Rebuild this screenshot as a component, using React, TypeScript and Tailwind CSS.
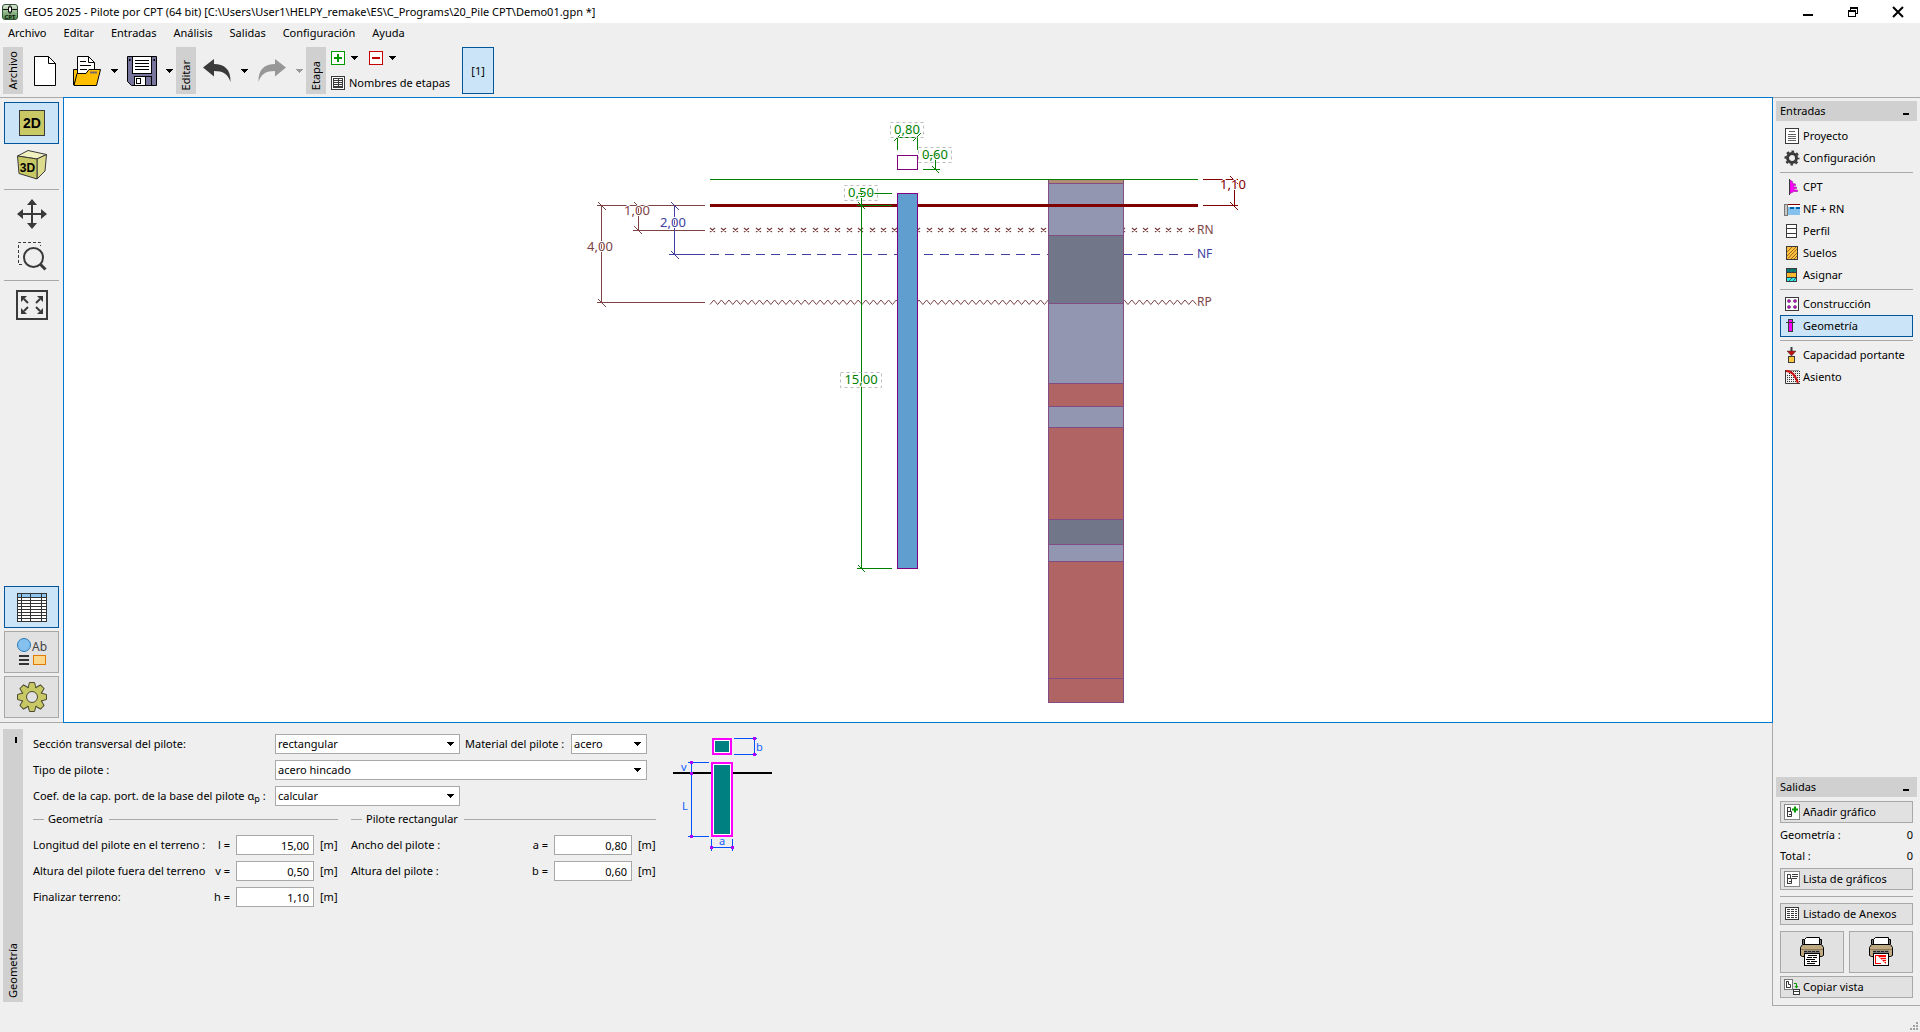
import { useState } from "react";
import type { ReactNode } from "react";

const MENU = ["Archivo", "Editar", "Entradas", "Análisis", "Salidas", "Configuración", "Ayuda"];

/* ---------- small shared pieces ---------- */

function Caret({ muted = false }: { muted?: boolean }) {
    return (
        <svg width="8" height="4" viewBox="0 0 8 4" shapeRendering="crispEdges">
            <path d="M0 0h8L4 4z" fill={muted ? "#9a9a9a" : "#000"} />
        </svg>
    );
}

function CaretButton({ label, muted }: { label: string; muted?: boolean }) {
    return (
        <button aria-label={label} className="flex w-[14px] items-center justify-center self-stretch">
            <Caret muted={muted} />
        </button>
    );
}

function VerticalLabel({ children }: { children: string }) {
    return (
        <div className="flex w-5 items-end justify-center bg-[#d0d0d0] pb-1">
            <span className="rotate-180 leading-4 [writing-mode:vertical-rl]">{children}</span>
        </div>
    );
}

function Icon({ children }: { children: ReactNode }) {
    return (
        <svg width="16" height="16" viewBox="0 0 16 16" className="shrink-0">
            {children}
        </svg>
    );
}

/* ---------- title bar + toolbar ---------- */

function TitleBar() {
    return (
        <div className="flex h-[23px] items-center bg-white">
            <svg width="16" height="16" viewBox="0 0 16 16" className="ml-0.5 shrink-0">
                <defs>
                    <linearGradient id="logo" x1="0" y1="0" x2="0" y2="1">
                        <stop offset="0" stopColor="#dfead8" />
                        <stop offset="1" stopColor="#4c8a45" />
                    </linearGradient>
                </defs>
                <rect x=".5" y=".5" width="15" height="15" rx="2.5" fill="url(#logo)" stroke="#33533a" />
                <path d="M1 5.5h5M10 5.5h5M8 1v2M8 8v2" stroke="#111" />
                <rect x="6.5" y="3" width="3" height="5" fill="#fff" stroke="#111" />
                <text x="8" y="14.5" textAnchor="middle" fontSize="6" fontWeight="700" fill="#111">CPT</text>
            </svg>
            <h1 className="ml-1.5 flex-1">
                GEO5 2025 - Pilote por CPT (64 bit) [C:\Users\User1\HELPY_remake\ES\C_Programs\20_Pile CPT\Demo01.gpn *]
            </h1>
            <div className="flex self-stretch">
                <button aria-label="Minimizar" className="flex w-[45px] items-center justify-center">
                    <svg width="12" height="12" viewBox="0 0 12 12"><path d="M1 9h10" stroke="#000" strokeWidth="2" /></svg>
                </button>
                <button aria-label="Restaurar" className="flex w-[45px] items-center justify-center">
                    <svg width="12" height="12" viewBox="0 0 12 12" fill="none" stroke="#000" shapeRendering="crispEdges">
                        <path d="M3.5 4V1.5h7v6H8" />
                        <path d="M3 2h8" />
                        <rect x="1.5" y="4.5" width="7" height="6" />
                        <path d="M1 5.5h8" />
                    </svg>
                </button>
                <button aria-label="Cerrar" className="flex w-[45px] items-center justify-center">
                    <svg width="12" height="12" viewBox="0 0 12 12"><path d="M1 1l10 10M11 1L1 11" stroke="#000" strokeWidth="2" /></svg>
                </button>
            </div>
        </div>
    );
}

function NewFileIcon() {
    return (
        <svg width="22" height="30" viewBox="0 0 22 30">
            <path d="M.5.5h14l7 7v22H.5z" fill="#fff" stroke="#000" />
            <path d="M14.5.5v7h7" fill="none" stroke="#000" />
        </svg>
    );
}

function OpenIcon() {
    return (
        <svg width="28" height="30" viewBox="0 0 28 30" stroke="#000">
            <path d="M.5 29V13.500h5v6z" fill="#ffc107" />
            <path d="M4.500 18V.5h11l6 6V18z" fill="#fff" />
            <path d="M15.500.5v6h6" fill="none" />
            <path d="M7 5.500h6M7 9.500h11M7 13.500h7" />
            <path d="M1 29.500l3-12h9l3-4h11.500l-4 16z" fill="#ffbf00" />
            <path d="M17 16.500h7" stroke="#7a6a6a" strokeWidth="2" />
        </svg>
    );
}

function SaveIcon() {
    return (
        <svg width="30" height="30" viewBox="0 0 30 30" stroke="#000">
            <path d="M.5.5h29v29H4.500l-4-4z" fill="#77759c" />
            <rect x="5.500" y=".5" width="19" height="17" fill="#fff" />
            <path d="M8 4.500h14M8 7.500h14M8 10.500h14M8 13.500h14" />
            <rect x="7.500" y="20.500" width="17" height="9" fill="#fff" />
            <rect x="18.500" y="20.500" width="6" height="9" fill="#77759c" />
            <rect x="9.500" y="22.500" width="4" height="5" fill="#fff" />
            <rect x="2" y="3" width="1.500" height="2" fill="#000" stroke="none" />
            <rect x="26.500" y="3" width="1.500" height="2" fill="#000" stroke="none" />
        </svg>
    );
}

function UndoIcon({ muted = false }: { muted?: boolean }) {
    return (
        <svg width="28" height="23" viewBox="0 0 28 23" className={muted ? "-scale-x-100" : ""}>
            <path d="M0 8.500L11 0v5c10 0 17 5 16.500 18C25 15 20 12 11 12v5.500z" fill={muted ? "#979797" : "#3a3a3a"} />
        </svg>
    );
}

function StageMark({ sign }: { sign: "plus" | "minus" }) {
    const color = sign === "plus" ? "#009a00" : "#c80000";
    return (
        <svg width="14" height="14" viewBox="0 0 14 14">
            <rect x=".5" y=".5" width="13" height="13" fill="#fff" stroke={color} />
            <path d={sign === "plus" ? "M3 7h8M7 3v8" : "M3 7h8"} stroke={color} strokeWidth="2" />
        </svg>
    );
}

function Toolbar() {
    return (
        <div className="flex h-[54px] pt-1 pr-1 pb-[3px] pl-[3px]">
            <VerticalLabel>Archivo</VerticalLabel>
            <button aria-label="Nuevo" className="flex w-[43px] items-center justify-center"><NewFileIcon /></button>
            <button aria-label="Abrir" className="flex w-[41px] items-center justify-center"><OpenIcon /></button>
            <CaretButton label="Abrir recientes" />
            <button aria-label="Guardar" className="flex w-[41px] items-center justify-center"><SaveIcon /></button>
            <CaretButton label="Guardar como" />
            <VerticalLabel>Editar</VerticalLabel>
            <button aria-label="Deshacer" className="flex w-[41px] items-center justify-center"><UndoIcon /></button>
            <CaretButton label="Historial de deshacer" />
            <button aria-label="Rehacer" className="flex w-[41px] items-center justify-center"><UndoIcon muted /></button>
            <CaretButton label="Historial de rehacer" muted />
            <VerticalLabel>Etapa</VerticalLabel>
            <div className="flex flex-col justify-between py-1 pl-[5px]">
                <div className="flex h-[14px] items-center gap-0.5">
                    <button aria-label="Añadir etapa"><StageMark sign="plus" /></button>
                    <CaretButton label="Opciones de añadir" />
                    <button aria-label="Quitar etapa" className="ml-1.5"><StageMark sign="minus" /></button>
                    <CaretButton label="Opciones de quitar" />
                </div>
                <button className="flex h-[14px] items-center gap-1">
                    <svg width="14" height="14" viewBox="0 0 14 14" stroke="#3a3a3a" shapeRendering="crispEdges">
                        <rect x=".5" y=".5" width="13" height="13" fill="#fff" />
                        <rect x="2.500" y="2.500" width="9" height="9" fill="none" />
                        <path d="M7.500 2v10M2 4.500h10M2 6.500h10M2 8.500h10M2 10.500h10" />
                    </svg>
                    Nombres de etapas
                </button>
            </div>
            <button className="ml-3 w-8 border border-[#00559b] bg-[#cce4f7]">[1]</button>
        </div>
    );
}

/* ---------- left tool column ---------- */

function ToolButton({ label, look = "plain", children }: { label: string; look?: "plain" | "raised" | "active"; children: ReactNode }) {
    const looks = {
        plain: "",
        raised: "border border-[#a8a8a8] bg-[#e1e1e1]",
        active: "border border-[#00559b] bg-[#cce4f7]",
    };
    return (
        <button aria-label={label} className={`flex h-[42px] w-[55px] items-center justify-center ${looks[look]}`}>
            {children}
        </button>
    );
}

function ToolColumn() {
    return (
        <div className="flex flex-col justify-between border-y border-[#a8a8a8] px-1 py-1">
            <div>
                <ToolButton label="Vista 2D" look="active">
                    <svg width="26" height="26" viewBox="0 0 26 26">
                        <rect x=".5" y=".5" width="25" height="25" fill="#c8c864" stroke="#3a3a3a" />
                        <text x="13" y="18" textAnchor="middle" fontSize="14" fontWeight="700" className="font-['Liberation_Sans',sans-serif]">2D</text>
                    </svg>
                </ToolButton>
                <ToolButton label="Vista 3D">
                    <svg width="30" height="30" viewBox="0 0 30 30" stroke="#3a3a3a" strokeLinejoin="round">
                        <path d="M.5 6L11 .5l18.500 4L20 9z" fill="#f0f0c0" />
                        <path d="M20 9l9.500-4.500L28 21l-8 8z" fill="#dcdc8c" />
                        <path d="M.5 6L20 9v20L2 23.500z" fill="#c8c864" />
                        <text x="10.500" y="22" textAnchor="middle" fontSize="12" fontWeight="700" fill="#000" stroke="none" className="font-['Liberation_Sans',sans-serif]">3D</text>
                    </svg>
                </ToolButton>
                <hr className="my-[3px] border-[#a8a8a8]" />
                <ToolButton label="Mover">
                    <svg width="30" height="30" viewBox="0 0 30 30" fill="#3a3a3a">
                        <path d="M15 4v22M4 15h22" stroke="#3a3a3a" strokeWidth="2" />
                        <path d="M15 0l5 6H10zM15 30l5-6H10zM0 15l6-5v10zM30 15l-6-5v10z" />
                    </svg>
                </ToolButton>
                <ToolButton label="Ampliar zona">
                    <svg width="30" height="30" viewBox="0 0 30 30" fill="none" stroke="#3a3a3a">
                        <path d="M5 23.500H1.500v-22h22V5" strokeDasharray="3 2" />
                        <circle cx="16.500" cy="16.500" r="9.500" fill="#efefef" strokeWidth="2" />
                        <path d="M23.500 23.500l5 5" strokeWidth="3" />
                    </svg>
                </ToolButton>
                <hr className="my-[3px] border-[#a8a8a8]" />
                <ToolButton label="Ajustar a ventana">
                    <svg width="32" height="30" viewBox="0 0 32 30" fill="#3a3a3a" stroke="#3a3a3a">
                        <rect x="1" y="1" width="30" height="28" fill="none" strokeWidth="2" />
                        <path d="M8 9l4 4M24 9l-4 4M8 21l4-4M24 21l-4-4" strokeWidth="2" />
                        <path d="M5 6h6l-6 6zM27 6h-6l6 6zM5 24h6l-6-6zM27 24h-6l6-6z" stroke="none" />
                    </svg>
                </ToolButton>
            </div>
            <div className="flex flex-col gap-[3px]">
                <ToolButton label="Tabla" look="active">
                    <svg width="30" height="29" viewBox="0 0 30 29" stroke="#333" shapeRendering="crispEdges">
                        <rect x=".5" y=".5" width="29" height="28" fill="#fff" />
                        <rect x=".5" y=".5" width="29" height="4" fill="#8cc4f0" />
                        <path d="M0 7.500h30M0 10.500h30M0 13.500h30M0 16.500h30M0 19.500h30M0 22.500h30M0 25.500h30M4.500 0v29M13.500 0v29M24.500 0v29" />
                    </svg>
                </ToolButton>
                <ToolButton label="Estilos de dibujo" look="raised">
                    <svg width="30" height="28" viewBox="0 0 30 28">
                        <circle cx="7" cy="7" r="6.500" fill="#85c1ef" stroke="#2878b8" />
                        <text x="15" y="13" fontSize="12" fill="#444">Ab</text>
                        <path d="M2 18h10M2 22h10M2 26h10" stroke="#333" strokeWidth="2" />
                        <rect x="16.500" y="17.500" width="12" height="9" fill="#fbd78c" stroke="#e07b00" />
                    </svg>
                </ToolButton>
                <ToolButton label="Ajustes" look="raised">
                    <svg width="30" height="30" viewBox="-15 -15 30 30" stroke="#4a4a30" fill="#c8c864">
                        <circle r="10" />
                        {[0, 45, 90, 135, 180, 225, 270, 315].map(a => (
                            <path key={a} d="M-4-9L-2.500-14.500h5L4-9" transform={`rotate(${a})`} />
                        ))}
                        <circle r="9.500" stroke="none" />
                        <circle r="5.500" fill="#e1e1e1" />
                    </svg>
                </ToolButton>
            </div>
        </div>
    );
}

/* ---------- drawing ---------- */

const LAYERS = [
    { top: 179, bottom: 183, fill: "#b08e76" },
    { top: 183, bottom: 235, fill: "#9296b0" },
    { top: 235, bottom: 303, fill: "#717789" },
    { top: 303, bottom: 383, fill: "#9296b0" },
    { top: 383, bottom: 406, fill: "#b06463" },
    { top: 406, bottom: 427, fill: "#9296b0" },
    { top: 427, bottom: 519, fill: "#b06463" },
    { top: 519, bottom: 544, fill: "#717789" },
    { top: 544, bottom: 561, fill: "#9296b0" },
    { top: 561, bottom: 678, fill: "#b06463" },
    { top: 678, bottom: 702, fill: "#b06463" },
];

const BROWN = "#7c4444";
const BLUE = "#4040a0";
const GREEN = "#008000";
const MAROON = "#800000";

const crosses = Array.from({ length: 43 }, (_, i) => Math.round(710 + i * 11.4));
const zigzag = Array.from({ length: 129 }, (_, i) => `${710 + i * 3.8},${i % 2 ? 300 : 304.5}`).join(" ");

function DimText({ x, y, color, boxed, children }: { x: number; y: number; color: string; boxed?: number; children: string }) {
    return (
        <>
            {boxed && (
                <rect x={x - boxed / 2} y={y - 11.5} width={boxed} height="15" fill="none" stroke="#bdbdbd" strokeDasharray="3 3" />
            )}
            <text x={x} y={y} textAnchor="middle" fill={color} stroke="#fff" strokeWidth="2" paintOrder="stroke">{children}</text>
        </>
    );
}

function PileDrawing() {
    return (
        <svg viewBox="64 98 1708 624" className="block h-full w-full text-[13px]" fill="none">
            <g shapeRendering="crispEdges">
                {/* reference levels */}
                <path d={crosses.map(x => `M${x} 228l5 4M${x + 5} 228l-5 4`).join("")} stroke={BROWN} strokeWidth="1.200" shapeRendering="auto" />
                <path d="M710 254.500h488" stroke={BLUE} strokeDasharray="9 6.300" />
                <polyline points={zigzag} stroke={BROWN} shapeRendering="auto" />

                {/* soil profile */}
                {LAYERS.map(l => (
                    <rect key={l.top} x="1048.500" y={l.top + 0.5} width="75" height={l.bottom - l.top} fill={l.fill} stroke="#814d82" />
                ))}
                <path d="M710 179.500h488" stroke={GREEN} />
                <rect x="710" y="204" width="488" height="3" fill={MAROON} />

                {/* pile */}
                <rect x="897.500" y="193.500" width="20" height="375" fill="#5f9ecf" stroke="#800080" />
                <rect x="897.500" y="155.500" width="20" height="14" fill="#fff" stroke="#800080" />

                {/* level dimensions */}
                <path d="M597 205.500h108M597 302.500h108M601.500 205v97M633 230.500h72M638.500 205v25" stroke={BROWN} />
                <path d="M669 254.500h36M674.500 205v49" stroke={BLUE} />
                {/* pile dimensions */}
                <path d="M857 568.500h35M857 205.500h35M858 193.500h34M861.500 193v375M897.500 137v13M917.500 137v13M897 137.500h21M923 155.500h17M923 169.500h17M935.500 155v14" stroke={GREEN} />
                {/* terrain dimension */}
                <path d="M1203 179.500h35M1203 205.500h35M1234.500 179v26" stroke={MAROON} />
            </g>

            <path d="M598 202l8 8M598 299l8 8M634 202l6 6M634 226l8 8" stroke={BROWN} />
            <path d="M671 202l8 8M671 251l8 8" stroke={BLUE} />
            <path d="M858 202l7 7M858 565l7 7M894 141l6-6M913 141l8-8M932 166l7 7" stroke={GREEN} />
            <path d="M1230 176l8 8M1230 202l8 8" stroke={MAROON} />

            <DimText x={600} y={251} color={BROWN}>4,00</DimText>
            <DimText x={637} y={215} color={BROWN}>1,00</DimText>
            <DimText x={673} y={227} color={BLUE}>2,00</DimText>
            <DimText x={907} y={134} color={GREEN} boxed={33}>0,80</DimText>
            <DimText x={935} y={159} color={GREEN} boxed={33}>0,60</DimText>
            <DimText x={861} y={197} color={GREEN} boxed={33}>0,50</DimText>
            <DimText x={861} y={384} color={GREEN} boxed={41}>15,00</DimText>
            <DimText x={1233} y={189} color={MAROON}>1,10</DimText>
            <g className="text-[12px]">
                <text x="1197" y="234" fill={BROWN}>RN</text>
                <text x="1197" y="258" fill={BLUE}>NF</text>
                <text x="1197" y="306" fill={BROWN}>RP</text>
            </g>
        </svg>
    );
}

/* ---------- bottom form ---------- */

function Select({ id, width, options }: { id: string; width: string; options: string[] }) {
    return (
        <div className={`relative ${width}`}>
            <select id={id} className="block h-5 w-full appearance-none border border-[#a8a8a8] bg-white pr-5 pl-0.5 leading-4">
                {options.map(o => <option key={o}>{o}</option>)}
            </select>
            <span className="pointer-events-none absolute inset-y-0 right-1.5 flex items-center"><Caret /></span>
        </div>
    );
}

function Field({ id, label, symbol, initial }: { id: string; label: string; symbol: string; initial: string }) {
    const [value, setValue] = useState(initial);
    return (
        <div className="flex h-5 items-center">
            <label htmlFor={id} className="flex flex-1 justify-between whitespace-nowrap">
                <span>{label}</span>
                <span>{symbol} =</span>
            </label>
            <input
                id={id}
                value={value}
                onChange={e => setValue(e.target.value)}
                className="mx-1.5 h-5 w-[78px] border border-[#a8a8a8] bg-white pr-1 text-right"
            />
            <span className="w-[18px]">[m]</span>
        </div>
    );
}

function Group({ title, children }: { title: string; children: ReactNode }) {
    return (
        <section className="w-[305px]">
            <h2 className="flex h-4 items-center">
                <span className="w-[11px] border-t border-[#a8a8a8]" />
                <span className="mx-1">{title}</span>
                <span className="ml-0.5 flex-1 border-t border-[#a8a8a8]" />
            </h2>
            <div className="mt-2 flex flex-col gap-1.5">{children}</div>
        </section>
    );
}

function SchemeDiagram() {
    return (
        <svg width="104" height="120" viewBox="0 0 104 120" className="shrink-0 text-[11px]" fill="none">
            <g shapeRendering="crispEdges">
                <path d="M1 39h99" stroke="#000" strokeWidth="2" />
                <rect x="41" y="5" width="18" height="15" fill="#fff" stroke="#f0f" strokeWidth="2" />
                <rect x="43" y="7" width="14" height="11" fill="#008080" />
                <rect x="40" y="29" width="20" height="73" fill="#fff" stroke="#f0f" strokeWidth="2" />
                <rect x="42" y="31" width="16" height="69" fill="#008080" />
                <path d="M16 28.500h21M16 102.500h21M19.500 28v74M62 4.500h23M62 20.500h23M82.500 4v16M39.500 105v12M60.500 105v12M39 113.500h22" stroke="#0050ff" />
                <path d="M18 28.500h3M18 39.500h3M18 102.500h3M81 4.500h3M81 20.500h3M38 113.500h3M59 113.500h3" stroke="#b000ff" strokeWidth="3" />
            </g>
            <g fill="#1060ff">
                <text x="9" y="37">v</text>
                <text x="10" y="76">L</text>
                <text x="84" y="17">b</text>
                <text x="50" y="111" textAnchor="middle">a</text>
            </g>
        </svg>
    );
}

function GeometryPanel() {
    return (
        <div className="flex min-h-[283px] border-r border-[#a8a8a8] pt-1.5 pb-1 pl-[3px]">
            <div className="flex w-5 flex-col items-center justify-between bg-[#d0d0d0] pt-2 pb-1">
                <button aria-label="Contraer panel" className="ml-1.5 h-1.5 w-0.5 bg-black" />
                <span className="rotate-180 leading-4 [writing-mode:vertical-rl]">Geometría</span>
            </div>
            <form className="ml-2.5 pt-[5px]">
                <div className="flex flex-col gap-1.5">
                    <div className="flex items-center">
                        <label htmlFor="section" className="w-[242px]">Sección transversal del pilote:</label>
                        <Select id="section" width="w-[185px]" options={["rectangular", "circular"]} />
                        <label htmlFor="material" className="w-[111px] pl-[5px]">Material del pilote :</label>
                        <Select id="material" width="w-[76px]" options={["acero", "hormigón"]} />
                    </div>
                    <div className="flex items-center">
                        <label htmlFor="type" className="w-[242px]">Tipo de pilote :</label>
                        <Select id="type" width="w-[372px]" options={["acero hincado", "hormigón hincado"]} />
                    </div>
                    <div className="flex items-center">
                        <label htmlFor="coef" className="w-[242px] whitespace-nowrap">
                            Coef. de la cap. port. de la base del pilote α<sub className="text-[9px]">p</sub> :
                        </label>
                        <Select id="coef" width="w-[185px]" options={["calcular", "introducir"]} />
                    </div>
                </div>
                <div className="mt-[5px] flex gap-[13px]">
                    <Group title="Geometría">
                        <Field id="l" label="Longitud del pilote en el terreno :" symbol="l" initial="15,00" />
                        <Field id="v" label="Altura del pilote fuera del terreno" symbol="v" initial="0,50" />
                        <Field id="h" label="Finalizar terreno:" symbol="h" initial="1,10" />
                    </Group>
                    <Group title="Pilote rectangular">
                        <Field id="a" label="Ancho del pilote :" symbol="a" initial="0,80" />
                        <Field id="b" label="Altura del pilote :" symbol="b" initial="0,60" />
                    </Group>
                </div>
            </form>
            <div className="ml-4 pt-[5px]"><SchemeDiagram /></div>
        </div>
    );
}

/* ---------- right sidebar ---------- */

const INK = "#3a3a3a";

const icons: Record<string, ReactNode> = {
    Proyecto: (
        <Icon>
            <rect x="1.500" y=".5" width="13" height="15" fill="#fff" stroke={INK} />
            <path d="M5 3.500h6M4 6.500h8M4 8.500h8M4 10.500h8M4 12.500h8" stroke="#666" />
        </Icon>
    ),
    Configuración: (
        <Icon>
            <circle cx="8" cy="8" r="4.500" fill="none" stroke={INK} strokeWidth="3" />
            <circle cx="8" cy="8" r="6.500" fill="none" stroke={INK} strokeWidth="2" strokeDasharray="2.600 2.505" strokeDashoffset="1.300" />
        </Icon>
    ),
    CPT: (
        <Icon>
            <path d="M6 1l2.500 1.500v2l3 .5v1.500H9.500V8h3v1.500H10v1.500h3.500v1.500H10L6 14.500z" fill="#f0f" stroke="#a010a0" strokeWidth=".6" />
            <path d="M5.500 0v16" stroke={INK} />
        </Icon>
    ),
    "NF + RN": (
        <Icon>
            <rect x="3" y="5" width="13" height="9" fill="#85c1ef" />
            <path d="M4 3.500h12" stroke={MAROON} />
            <path d="M4 5h12" stroke="#fff" strokeWidth="2" />
            <path d="M6 7h4M12 7h4" stroke="#0060b0" strokeWidth="2" />
            <rect x=".5" y="3.500" width="3" height="11" fill="#c8c8c8" stroke="#777" />
        </Icon>
    ),
    Perfil: (
        <Icon>
            <rect x="2.500" y="1.500" width="10" height="13" fill="#fff" stroke={INK} />
            <path d="M2 5.500h11M2 10.500h11" stroke={INK} />
        </Icon>
    ),
    Suelos: (
        <Icon>
            <rect x="2.500" y="1.500" width="11" height="13" fill="#ffc040" stroke={INK} />
            <path d="M3 7l5-5M3 11l9-9M4 13.500L13 4M7 14l6-6M10 14l3-3" stroke="#8a6018" strokeWidth=".9" />
        </Icon>
    ),
    Asignar: (
        <Icon>
            <rect x="2.500" y="1.500" width="10" height="4" fill="#008080" stroke={INK} />
            <rect x="2.500" y="5.500" width="10" height="5" fill="#ffb830" stroke={INK} />
            <rect x="2.500" y="10.500" width="10" height="4" fill="#30e8e8" stroke={INK} />
            <path d="M4 5l3-3M8 5l3-3M5 14l3-3M9 14l3-3" stroke={INK} strokeWidth=".7" />
        </Icon>
    ),
    Construcción: (
        <Icon>
            <rect x="1.500" y="1.500" width="13" height="13" fill="#fff" stroke={INK} />
            <g fill="#c010c0" stroke={INK} strokeWidth=".5">
                <circle cx="5" cy="5" r="1.600" /><circle cx="11" cy="5" r="1.600" />
                <circle cx="5" cy="11" r="1.600" /><circle cx="11" cy="11" r="1.600" />
            </g>
        </Icon>
    ),
    Geometría: (
        <Icon>
            <rect x="4.500" y="1.500" width="4" height="12" fill="#f0f" stroke={INK} />
            <path d="M2 4.500h9" stroke={INK} />
        </Icon>
    ),
    "Capacidad portante": (
        <Icon>
            <rect x="4.500" y="9.500" width="6" height="6" fill="#ffc840" stroke={INK} />
            <path d="M7.500 0v8" stroke={INK} strokeWidth="2" />
            <path d="M3 4h9L7.500 9z" fill="#c01010" stroke={INK} strokeWidth=".5" />
        </Icon>
    ),
    Asiento: (
        <Icon>
            <path d="M5 2.500h11M5 4.500h11M3 6.500h13M3 8.500h13M3 10.500h13M3 12.500h13" stroke="#333" strokeDasharray="1 1" />
            <path d="M1.500 1v13.500H16" fill="none" stroke={INK} />
            <path d="M1.500 1.500h13" stroke={INK} strokeDasharray="1 1" />
            <path d="M2 2c6 0 9 4 12 12" fill="none" stroke="#d01010" strokeWidth="2" />
        </Icon>
    ),
    add: (
        <Icon>
            <rect x=".5" y=".5" width="15" height="15" fill="#fff" stroke="#888" />
            <path d="M3.500 3v10M3.500 3.500h3v4M3.500 7.500h4v5h-4M5 10.500h2" fill="none" stroke={INK} />
            <path d="M8 5.500h6M11 2.500v6" stroke="#009a00" strokeWidth="2" />
        </Icon>
    ),
    list: (
        <Icon>
            <rect x=".5" y=".5" width="15" height="15" fill="#fff" stroke="#888" />
            <path d="M3.500 3v10M3.500 3.500h3v4M3.500 7.500h4v5h-4M5 10.500h2M8 3.500h6M8 5.500h6M8 7.500h5" fill="none" stroke={INK} />
        </Icon>
    ),
    annex: (
        <Icon>
            <rect x="1.500" y="1.500" width="13" height="12" fill="#fff" stroke={INK} />
            <path d="M3 3.500h3M7 3.500h3M11 3.500h2M3 5.500h3M7 5.500h3M11 5.500h2M3 7.500h3M7 7.500h3M11 7.500h2M3 9.500h3M7 9.500h3M11 9.500h2M3 11.500h3M7 11.500h3M11 11.500h2" stroke={INK} />
        </Icon>
    ),
    copy: (
        <Icon>
            <rect x=".5" y=".5" width="8" height="10" fill="#fff" stroke="#777" />
            <path d="M2.500 2v7M2.500 2.500h2v3h2v3h-4" fill="none" stroke={INK} />
            <path d="M10 4.500h2.500V8" fill="none" stroke="#009a00" />
            <path d="M10.500 7h4L12.500 9.500z" fill="#009a00" />
            <rect x="9.500" y="10.500" width="6" height="5" fill="#fff" stroke={INK} />
            <path d="M9 12.500h7" stroke={INK} />
        </Icon>
    ),
};

function PrinterIcon({ picture = false }: { picture?: boolean }) {
    return (
        <svg width="24" height="30" viewBox="0 0 24 30" stroke="#000">
            <path d="M2.500 7V2.500h2V7M19.500 7V2.500h2V7" fill="#777" />
            <path d="M4.500 8V2.500l2-2h13V8z" fill="#fff" />
            <path d="M2.500 7.500h19l2 3v8l-2 1h-19l-2-1v-8z" fill="#bfa981" />
            <path d="M1 12.500h22" stroke="#8e7b58" />
            <path d="M4 13.500h16v3H4z" fill="#777" stroke="none" />
            <path d="M4 14.500h16" stroke="#222" strokeDasharray="3 1" />
            <rect x="4.500" y="16.500" width="15" height="12" fill="#fff" />
            {picture ? (
                <>
                    <path d="M6.500 18v9M6 18.500h3M6 26.500h6" stroke="#f00" />
                    <path d="M8 18h9v9z" fill="#f00" stroke="none" />
                    <path d="M11 20.500h6M13 22.500h4M15 24.500h2" stroke="#fff" strokeWidth=".8" />
                </>
            ) : (
                <path d="M8 18.500h9M7 20.500h5M13 20.500h4M6 22.500h9M7 24.500h3M11 24.500h6M7 26.500h8" shapeRendering="crispEdges" />
            )}
        </svg>
    );
}

function PanelTitle({ children }: { children: string }) {
    return (
        <div className="flex h-5 items-center justify-between bg-[#d0d0d0] px-1">
            <h2>{children}</h2>
            <button aria-label={`Contraer ${children}`} className="mt-1.5 mr-1 h-0.5 w-1.5 bg-black" />
        </div>
    );
}

function NavItem({ name, active }: { name: string; active?: boolean }) {
    return (
        <button
            className={`flex h-[22px] w-full items-center gap-[3px] border pl-[3px] whitespace-nowrap ${active ? "border-[#00559b] bg-[#cce4f7]" : "border-transparent"}`}
        >
            {icons[name]}
            {name}
        </button>
    );
}

function OutputButton({ icon, children }: { icon: string; children: string }) {
    return (
        <button className="flex h-[22px] w-full items-center gap-[3px] border border-[#a8a8a8] bg-[#e1e1e1] pl-[3px] whitespace-nowrap">
            {icons[icon]}
            {children}
        </button>
    );
}

const NAV = [
    ["Proyecto", "Configuración"],
    ["CPT", "NF + RN", "Perfil", "Suelos", "Asignar"],
    ["Construcción", "Geometría"],
    ["Capacidad portante", "Asiento"],
];

function Sidebar() {
    return (
        <aside className="flex w-[147px] shrink-0 flex-col justify-between border-y border-[#a8a8a8] pt-[3px] pr-[3px] pb-[7px] pl-[3px]">
            <div>
                <PanelTitle>Entradas</PanelTitle>
                <nav className="px-1 pt-1">
                    {NAV.map((items, i) => (
                        <div key={i}>
                            {i > 0 && <hr className="my-[3px] border-[#a8a8a8]" />}
                            {items.map(name => <NavItem key={name} name={name} active={name === "Geometría"} />)}
                        </div>
                    ))}
                </nav>
            </div>
            <div>
                <PanelTitle>Salidas</PanelTitle>
                <div className="px-1 pt-1">
                    <OutputButton icon="add">Añadir gráfico</OutputButton>
                    <dl className="pt-px pb-0.5">
                        <div className="flex h-[21px] items-center justify-between"><dt>Geometría :</dt><dd>0</dd></div>
                        <div className="flex h-[21px] items-center justify-between"><dt>Total :</dt><dd>0</dd></div>
                    </dl>
                    <OutputButton icon="list">Lista de gráficos</OutputButton>
                    <hr className="my-1.5 border-[#a8a8a8]" />
                    <OutputButton icon="annex">Listado de Anexos</OutputButton>
                    <div className="mt-1.5 mb-[3px] grid grid-cols-2 gap-[5px]">
                        <button aria-label="Imprimir informe" className="flex h-[42px] items-center justify-center border border-[#a8a8a8] bg-[#e1e1e1]"><PrinterIcon /></button>
                        <button aria-label="Imprimir vista" className="flex h-[42px] items-center justify-center border border-[#a8a8a8] bg-[#e1e1e1]"><PrinterIcon picture /></button>
                    </div>
                    <OutputButton icon="copy">Copiar vista</OutputButton>
                </div>
            </div>
        </aside>
    );
}

export default function App() {
    return (
        <div className="flex h-screen flex-col overflow-hidden bg-[#efefef] font-['Noto_Sans','Open_Sans',sans-serif] text-[11px] leading-4 text-black">
            <TitleBar />
            <nav className="flex h-5 items-center gap-[17px] px-2">
                {MENU.map(m => <button key={m}>{m}</button>)}
            </nav>
            <Toolbar />
            <div className="flex min-h-0 flex-1">
                <main className="flex min-w-0 flex-1 flex-col">
                    <div className="flex min-h-0 flex-1">
                        <ToolColumn />
                        <div className="min-w-0 flex-1 border border-[#0078d0] bg-white">
                            <PileDrawing />
                        </div>
                    </div>
                    <GeometryPanel />
                </main>
                <Sidebar />
            </div>
            <footer className="flex h-[26px] items-end justify-end p-0.5">
                <svg width="8" height="8" viewBox="0 0 8 8" fill="#a0a0a0">
                    <path d="M6 0h2v2H6zM3 3h2v2H3zM6 3h2v2H6zM0 6h2v2H0zM3 6h2v2H3zM6 6h2v2H6z" />
                </svg>
            </footer>
        </div>
    );
}
